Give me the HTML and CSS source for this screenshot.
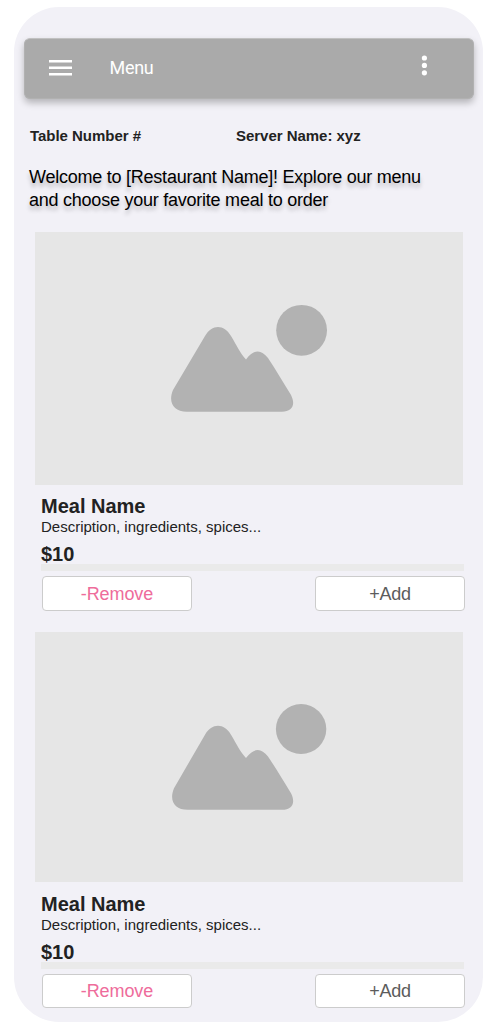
FILE: index.html
```
<!DOCTYPE html>
<html lang="en">
<head>
<meta charset="utf-8">
<title>Menu</title>
<link rel="stylesheet" href="styles.css">
</head>
<body>
<main class="phone">
  <header class="appbar">
    <svg class="menu-icon" width="23" height="16" viewBox="0 0 23 16"><path d="M0 0h23v2.6H0zM0 6.5h23v2.6H0zM0 13h23v2.6H0z" fill="#fff"/></svg>
    <h1 class="appbar-title">Menu</h1>
    <svg class="more-icon" width="6" height="21" viewBox="0 0 6 21"><g fill="#fff"><circle cx="3.400" cy="3" r="2.6"/><circle cx="3.400" cy="10.4" r="2.6"/><circle cx="3.400" cy="17.8" r="2.6"/></g></svg>
  </header>
  <div class="info"><span class="table">Table Number #</span><span>Server Name: xyz</span></div>
  <p class="welcome">Welcome to [Restaurant Name]! Explore our menu<br>and choose your favorite meal to order</p>
  <section class="meal">
    <div class="photo">
      <svg class="placeholder" width="157" height="108" viewBox="0 0 157 108"><g fill="#b2b2b2"><circle cx="131.6" cy="26.3" r="25.4"/><path d="M35 32C42 20 54 20 61 32C67 42 70 49 76 55.500C84 45 91 45 98 54C106 66 113 78 121 91C126 101 122 107.800 112 107.800H17C3 107.800-2 98 3 86Z"/></g></svg>
    </div>
    <div class="details">
      <h2 class="name">Meal Name</h2>
      <p class="description">Description, ingredients, spices...</p>
      <p class="price">$10</p>
    </div>
    <div class="divider"></div>
    <div class="actions"><button class="button remove">-Remove</button><button class="button add">+Add</button></div>
  </section>
  <section class="meal second">
    <div class="photo">
      <svg class="placeholder" width="157" height="107" viewBox="0 0 157 108" preserveAspectRatio="none"><g fill="#b2b2b2"><circle cx="131.1" cy="26.3" r="25.2"/><path d="M35 32C42 20 54 20 61 32C67 42 70 49 76 55.500C84 45 91 45 98 54C106 66 113 78 121 91C126 101 122 107.800 112 107.800H18C4 107.800-1 98 4 86Z"/></g></svg>
    </div>
    <div class="details">
      <h2 class="name">Meal Name</h2>
      <p class="description">Description, ingredients, spices...</p>
      <p class="price">$10</p>
    </div>
    <div class="divider"></div>
    <div class="actions"><button class="button remove">-Remove</button><button class="button add">+Add</button></div>
  </section>
</main>
</body>
</html>
```
FILE: styles.css
```
* { box-sizing: border-box; margin: 0; }
body { background: #fff; font-family: "Liberation Sans", Arial, sans-serif; color: #222; }
svg { display: block; }
.phone { width: 469px; height: 1015px; margin: 7px 0 0 14px; padding-top: 31px; background: #f2f1f7; border-radius: 45px; }
.appbar { display: flex; align-items: center; width: 450px; height: 61px; margin-left: 10px; padding: 0 46px 1px 24px; background: #aaa; border: 1px solid #b1b1b1; border-top-color: #c1c1c1; border-radius: 6px; box-shadow: 0 4px 7px rgba(0,0,0,.25); }
.appbar-title { flex: 1; margin-left: 37.5px; font: 400 18px/24px Roboto, sans-serif; letter-spacing: -.3px; color: #fff; }
.more-icon { margin-bottom: 6px; }
.info { display: flex; margin: 27px 0 0 16px; font-size: 15px; font-weight: 700; line-height: 20px; letter-spacing: -.03px; white-space: nowrap; }
.table { width: 206px; }
.welcome { margin: 20px 0 0 15px; font-size: 18px; line-height: 23px; letter-spacing: -.24px; color: #000; white-space: nowrap; text-shadow: 0 4px 4px rgba(0,0,0,.25); }
.meal { width: 430px; margin: 20px 0 0 21px; }
.meal.second { margin-top: 21px; }
.photo { display: flex; width: 428px; height: 253px; padding: 72px 0 0 135px; background: #e6e6e6; }
.details { padding: 10px 0 0 6px; height: 79px; white-space: nowrap; }
.name { font-size: 20px; line-height: 22px; }
.description { padding-top: 1px; font-size: 15px; line-height: 18px; }
.price { padding-top: 7px; font-size: 20px; line-height: 22px; font-weight: 700; }
.divider { width: 423px; height: 7px; margin-left: 6px; background: #eaeaea; }
.actions { display: flex; justify-content: space-between; width: 423px; margin: 5px 0 0 7px; }
.button { width: 150px; height: 35px; padding: 2px 0 0; background: #fff; border: 1px solid #ccc; border-radius: 4px; font: 18px "Liberation Sans", Arial, sans-serif; letter-spacing: -.1px; }
.remove { color: #ee6c9b; }
.add { color: #5c5c5c; letter-spacing: -.2px; }
.second .photo { height: 250px; padding-top: 71px; }
.second .details { height: 80px; padding-top: 11px; }
.second .button { height: 34px; padding-top: 0; }
```
